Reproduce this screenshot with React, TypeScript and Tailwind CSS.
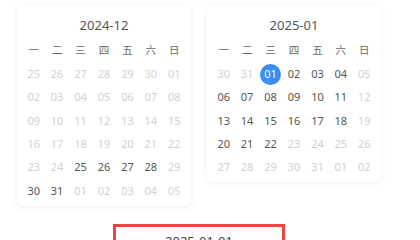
import React from "react";

type Day = { d: string; on: boolean; sel?: boolean };

const mk = (list: string, enabled: string[], sel?: string): Day[][] => {
  const arr = list.split(" ");
  const rows: Day[][] = [];
  for (let i = 0; i < arr.length; i += 7) {
    rows.push(
      arr.slice(i, i + 7).map((d, j) => {
        const idx = i + j;
        return { d, on: enabled.includes(String(idx)), sel: sel === String(idx) };
      })
    );
  }
  return rows;
};

const dec = mk(
  "25 26 27 28 29 30 01 02 03 04 05 06 07 08 09 10 11 12 13 14 15 16 17 18 19 20 21 22 23 24 25 26 27 28 29 30 31 01 02 03 04 05",
  ["30", "31", "32", "33", "35", "36"]
);
const jan = mk(
  "30 31 01 02 03 04 05 06 07 08 09 10 11 12 13 14 15 16 17 18 19 20 21 22 23 24 25 26 27 28 29 30 31 01 02",
  ["2", "3", "4", "5", "7", "8", "9", "10", "11", "12", "14", "15", "16", "17", "18", "19", "21", "22", "23"],
  "2"
);

const weeks = ["一", "二", "三", "四", "五", "六", "日"];

function Card({ title, rows }: { title: string; rows: Day[][] }) {
  return (
    <div className="w-[174px] bg-white rounded-[5px] shadow-[0_1px_6px_rgba(0,0,0,0.07)] pt-[12px] pb-[3px] px-[5px]">
      <div className="h-[18px] flex items-center justify-center text-[13px] text-[#555]">{title}</div>
      <div className="grid grid-cols-7 mt-[4px]">
        {weeks.map((w) => (
          <div key={w} className="h-[23.4px] flex items-center justify-center text-[10.5px] text-[#666]">
            {w}
          </div>
        ))}
        {rows.flat().map((c, i) => (
          <div key={i} className="h-[23.4px] flex items-center justify-center">
            {c.sel ? (
              <span className="w-[21px] h-[21px] rounded-full bg-[#3a8ff5] text-white text-[11px] flex items-center justify-center">
                {c.d}
              </span>
            ) : (
              <span className={"text-[11px] " + (c.on ? "text-[#555]" : "text-[#d0d0d0]")}>{c.d}</span>
            )}
          </div>
        ))}
      </div>
    </div>
  );
}

export default function App() {
  return (
    <div
      className="w-[420px] h-[240px] overflow-hidden bg-white"
      style={{ fontFamily: '"Noto Sans", "Noto Sans CJK SC", sans-serif' }}
    >
      <div className="w-[398px] flex flex-col items-center pt-[5px]">
        <div className="flex items-start gap-[16px]">
          <Card title="2024-12" rows={dec} />
          <Card title="2025-01" rows={jan} />
        </div>
        <div className="mt-[18px] w-[172px] border-[3px] border-[#f04444] pt-[5px] h-[60px] flex justify-center text-[13px] text-[#444]">
          2025-01-01
        </div>
      </div>
    </div>
  );
}
